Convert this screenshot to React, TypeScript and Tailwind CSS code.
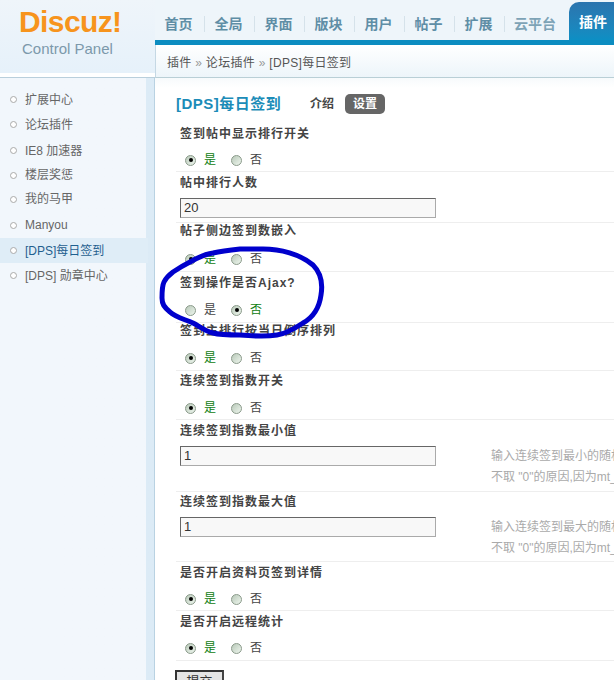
import React from 'react';

const navItems = ['首页', '全局', '界面', '版块', '用户', '帖子', '扩展'];

const menuItems = [
  { label: '扩展中心', height: 'h-[25px]' },
  { label: '论坛插件', height: 'h-[25px]' },
  { label: 'IE8 加速器', height: 'h-[27px]' },
  { label: '楼层奖惩', height: 'h-[22px]' },
  { label: '我的马甲', height: 'h-[26px]' },
  { label: 'Manyou', height: 'h-[26px]' },
  { label: '[DPS]每日签到', height: 'h-[25px]', active: true },
  { label: '[DPS] 勋章中心', height: 'h-[25px]' },
];

const Radio: React.FC<{ checked?: boolean }> = ({ checked }) => (
  <span className="w-[11px] h-[11px] rounded-full border border-[#8a9a8a] bg-gradient-to-br from-[#b9c9b9] to-[#eef6ee] flex items-center justify-center shrink-0">
    {checked && <span className="w-[4px] h-[4px] rounded-full bg-black" />}
  </span>
);

const YesNo: React.FC<{ value: boolean }> = ({ value }) => (
  <div className="flex items-center pl-[9px] h-[14px]">
    <Radio checked={value} />
    <span className={`ml-[8px] w-[27px] ${value ? 'text-[#108010]' : 'text-[#444]'}`}>是</span>
    <Radio checked={!value} />
    <span className={`ml-[8px] ${value ? 'text-[#444]' : 'text-[#108010]'}`}>否</span>
  </div>
);

const Label: React.FC<{ children: React.ReactNode; top: string }> = ({ children, top }) => (
  <div className={`${top} pl-[4px] leading-[16px] font-bold text-[#444] tracking-[1px] whitespace-nowrap`}>{children}</div>
);

const RadioRow: React.FC<{ label: string; value: boolean; height: string; top: string; gap: string }> = ({ label, value, height, top, gap }) => (
  <div className={`${height} border-b border-[#eeeeee] shrink-0`}>
    <Label top={top}>{label}</Label>
    <div className={gap}><YesNo value={value} /></div>
  </div>
);

const InputRow: React.FC<{ label: string; value: string; height: string; top: string; hint?: string[] }> = ({ label, value, height, top, hint }) => (
  <div className={`${height} border-b border-[#eeeeee] shrink-0`}>
    <Label top={top}>{label}</Label>
    <div className="flex items-start pl-[4px] pt-[7px]">
      <div className="w-[256px] h-[20px] shrink-0 border border-[#aaa] border-t-[#666] border-l-[#666] bg-[#f8f8f8] pl-[3px] text-[13px] leading-[18px] text-[#333]">{value}</div>
      {hint && (
        <div className="ml-[55px] text-[#aaa] leading-[21px] whitespace-nowrap">
          {hint.map(line => <div key={line}>{line}</div>)}
        </div>
      )}
    </div>
  </div>
);

export default function App() {
  return (
    <div
      className="relative w-[614px] h-[680px] overflow-hidden bg-white text-[12px] text-[#444]"
      style={{ fontFamily: '"Liberation Sans", "Noto Sans CJK SC", sans-serif' }}
    >
      {/* header */}
      <div className="flex h-[78px]">
        <div className="w-[155px] shrink-0 border-b border-[#b9cfdc] bg-white">
          <div className="h-[73px] bg-gradient-to-b from-[#eff5fa] to-[#e6f1fa] pl-[19px] pt-[4px]">
            <div className="text-[30px] leading-[36px] font-bold text-[#f7941d] tracking-[-0.6px]">Discuz!</div>
            <div className="pl-[3px] pt-[1px] text-[15px] leading-[16px] text-[#7c99ab]">Control Panel</div>
          </div>
        </div>
        <div className="flex-1 min-w-0 flex flex-col">
          <div className="h-[40px] bg-[#eef5fa] flex items-end">
            {navItems.map(item => (
              <div key={item} className="w-[50px] h-[30px] mb-[1px] flex items-center justify-center">
                <span className="w-[50px] pr-[2px] text-center text-[14px] font-bold leading-[16px] text-[#5f8ea6] border-r border-[#d5e2ea]">{item}</span>
              </div>
            ))}
            <div className="w-[64px] h-[30px] mb-[1px] flex items-center pl-[9px] text-[14px] font-bold text-[#7da3b6] whitespace-nowrap">云平台</div>
            <div className="flex-1 h-[38px] rounded-tl-[10px] bg-gradient-to-b from-[#2a74ae] to-[#0c8fc4] pl-[10px] pt-[12px] text-[14px] font-bold leading-[16px] text-white whitespace-nowrap">插件</div>
          </div>
          <div className="h-[5px] bg-[#0c8cc0]" />
          <div className="h-[33px] border-b border-[#b9cfd6] border-l border-l-[#c5d8e4] bg-gradient-to-b from-white to-[#edf5fa] pl-[11px] pt-[10px] leading-[16px] text-[#555] tracking-[0.3px] whitespace-nowrap">
            插件 <span className="text-[#999]">»</span> 论坛插件 <span className="text-[#999]">»</span> [DPS]每日签到
          </div>
        </div>
      </div>

      <div className="flex h-[602px]">
        {/* side menu */}
        <div className="w-[155px] shrink-0 border-r border-[#b9d2e2] bg-gradient-to-r from-[#f2f7fc] from-[95%] to-[#dcebf6] to-[95%] pt-[9px] pr-[6px]">
          {menuItems.map(item => (
            <div
              key={item.label}
              className={`${item.height} flex items-center pl-[10px] whitespace-nowrap ${item.active ? 'bg-[#dfedf7] text-[#1f5f8f]' : 'text-[#666]'}`}
            >
              <span className="w-[7px] h-[7px] mr-[8px] rounded-full border border-[#aaa] bg-white shrink-0" />
              {item.label}
            </div>
          ))}
        </div>

        {/* settings form */}
        <div className="flex-1 min-w-0 flex flex-col pl-[21px] pt-[15px] bg-gradient-to-b from-[#f7fafc] to-white to-[10px]">
          <div className="flex items-center h-[22px] mb-[11px] shrink-0">
            <span className="w-[134px] text-[15px] font-bold text-[#1c8cb8] tracking-[0.5px] whitespace-nowrap">[DPS]每日签到</span>
            <span className="w-[35px] font-bold text-[#444]">介绍</span>
            <span className="w-[40px] h-[20px] rounded-[5px] bg-[#666] text-white font-bold text-center leading-[20px]">设置</span>
          </div>
          <RadioRow label="签到帖中显示排行开关" value={true} height="h-[46px]" top="pt-[0px]" gap="pt-[11px]" />
          <InputRow label="帖中排行人数" value="20" height="h-[51px]" top="pt-[3px]" />
          <RadioRow label="帖子侧边签到数嵌入" value={true} height="h-[49px]" top="pt-[0px]" gap="pt-[13px]" />
          <RadioRow label="签到操作是否Ajax?" value={false} height="h-[51px]" top="pt-[3px]" gap="pt-[12px]" />
          <RadioRow label="签到主排行按当日倒序排列" value={true} height="h-[48px]" top="pt-[0px]" gap="pt-[12px]" />
          <RadioRow label="连续签到指数开关" value={true} height="h-[49px]" top="pt-[2px]" gap="pt-[12px]" />
          <InputRow label="连续签到指数最小值" value="1" height="h-[72px]" top="pt-[3px]" hint={['输入连续签到最小的随机数', '不取 "0"的原因,因为mt_rand']} />
          <InputRow label="连续签到指数最大值" value="1" height="h-[70px]" top="pt-[2px]" hint={['输入连续签到最大的随机数', '不取 "0"的原因,因为mt_rand']} />
          <RadioRow label="是否开启资料页签到详情" value={true} height="h-[49px]" top="pt-[3px]" gap="pt-[11px]" />
          <RadioRow label="是否开启远程统计" value={true} height="h-[50px]" top="pt-[3px]" gap="pt-[11px]" />
          <div className="pt-[9px] -ml-[1px] shrink-0">
            <button className="w-[49px] h-[24px] border-2 border-[#333] border-r-[#444] bg-[#e4e4e4] text-[13px] leading-[18px] text-[#333]">提交</button>
          </div>
        </div>
      </div>

      {/* hand drawn marker over the screenshot */}
      <svg className="absolute left-0 top-0 pointer-events-none" width="614" height="680" fill="none">
        <path
          d="M263 249 C280 249 300 254 313 265 C321 273 323 283 321 295 C319 310 312 318 303 323 C294 329 285 334 277 335 C265 337 252 336 240 335 C230 335 220 335 213 333 C205 331 199 326 193 323 C184 319 175 317 170 312 C164 307 162 304 162 298 C162 291 162 286 164 282 C166 278 169 275 173 272 C179 268 184 265 190 262 C197 258 205 254 213 253 C222 251 231 250 240 249 C248 249 255 249 263 249 Z"
          stroke="#0000cc"
          strokeWidth="5"
          strokeLinejoin="round"
        />
      </svg>
    </div>
  );
}
